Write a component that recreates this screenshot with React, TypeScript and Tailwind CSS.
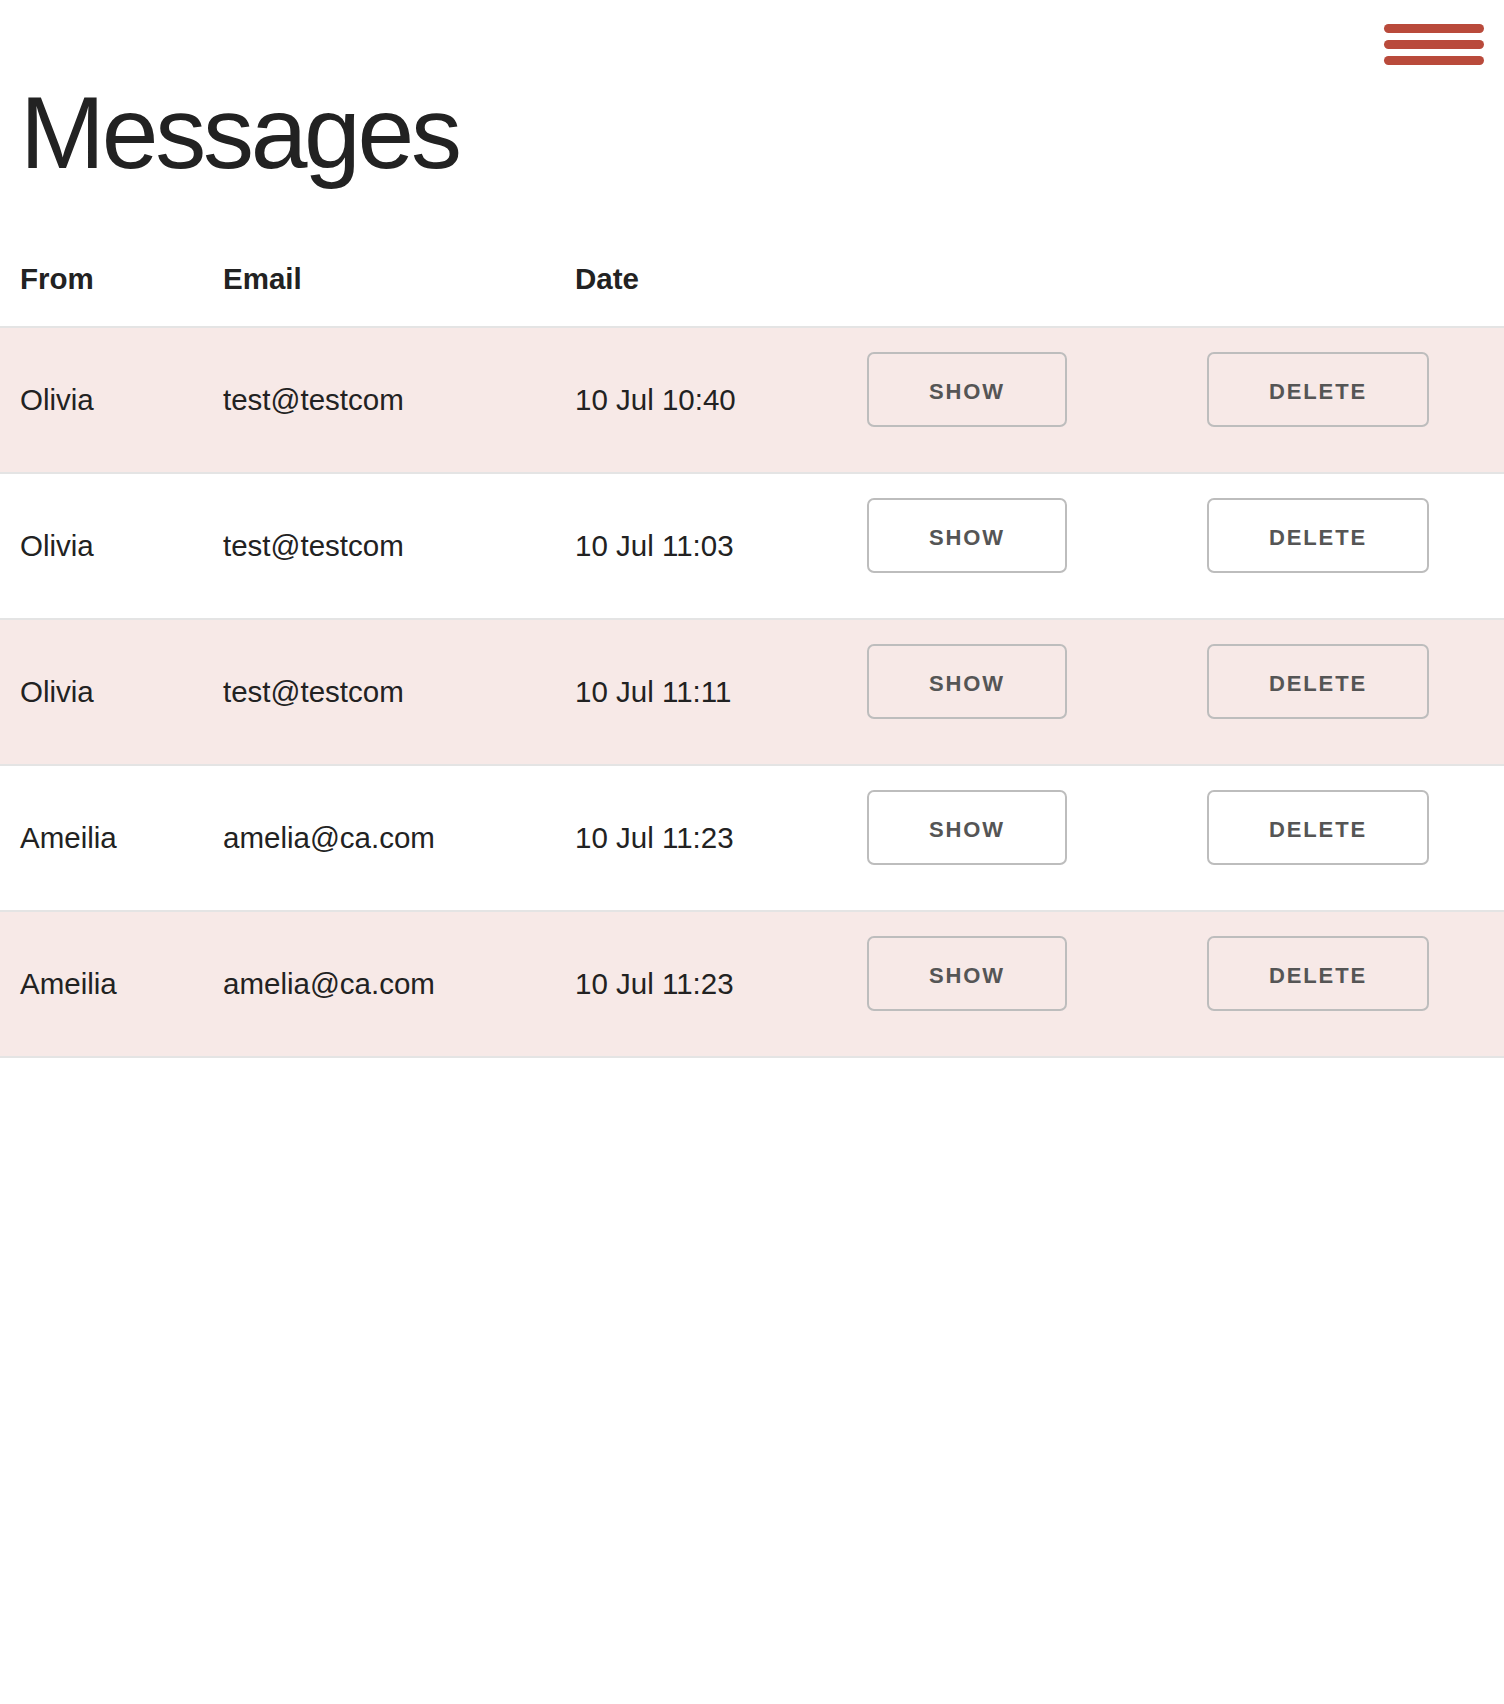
const rows = [
  { from: 'Olivia', email: 'test@testcom', date: '10 Jul 10:40' },
  { from: 'Olivia', email: 'test@testcom', date: '10 Jul 11:03' },
  { from: 'Olivia', email: 'test@testcom', date: '10 Jul 11:11' },
  { from: 'Ameilia', email: 'amelia@ca.com', date: '10 Jul 11:23' },
  { from: 'Ameilia', email: 'amelia@ca.com', date: '10 Jul 11:23' },
];

const cols = 'grid grid-cols-[203px_352px_292px_340px_1fr] pl-[20px]';

function Btn({ children }: { children: React.ReactNode }) {
  return (
    <button className="h-[75px] px-[60px] pt-[5px] border-2 border-[#bdbdbd] rounded-[7px] bg-transparent text-[22px] font-bold tracking-[0.085em] text-[#555555] leading-none">
      {children}
    </button>
  );
}

export default function App() {
  return (
    <div className="min-h-[1704px] bg-white text-[#222222]" style={{ fontFamily: '"Liberation Sans", Arial, sans-serif' }}>
      <div className="h-[82px] flex justify-end pt-[24px] pr-[20px]">
        <div className="w-[100px] flex flex-col gap-[7px]">
          <span className="h-[9px] rounded-full bg-[#b94a3b]" />
          <span className="h-[9px] rounded-full bg-[#b94a3b]" />
          <span className="h-[9px] rounded-full bg-[#b94a3b]" />
        </div>
      </div>

      <h1 className="pl-[20px] text-[102px] leading-none tracking-[-0.032em] font-normal">Messages</h1>

      <div className={`${cols} h-[144px] items-end pb-[30px] border-b-2 border-[#e4e4e4] text-[29.5px] leading-[1.2] font-bold`}>
        <span>From</span>
        <span>Email</span>
        <span>Date</span>
        <span />
        <span />
      </div>

      {rows.map((r, i) => (
        <div
          key={i}
          className={`${cols} h-[146px] items-center border-b-2 border-[#e4e4e4] text-[29.5px] leading-[1.2] ${i % 2 === 0 ? 'bg-[#f7e9e7]' : 'bg-white'}`}
        >
          <span>{r.from}</span>
          <span>{r.email}</span>
          <span>{r.date}</span>
          <div className="self-start pt-[24px]">
            <Btn>SHOW</Btn>
          </div>
          <div className="self-start pt-[24px]">
            <Btn>DELETE</Btn>
          </div>
        </div>
      ))}
    </div>
  );
}
